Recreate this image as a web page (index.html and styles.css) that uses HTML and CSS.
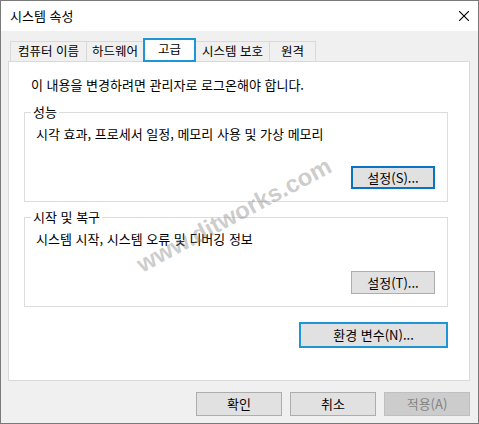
FILE: index.html
```html
<!DOCTYPE html>
<html lang="ko">
<head>
  <meta charset="UTF-8">
  <meta name="viewport" content="width=device-width, initial-scale=1.0">
  <title>시스템 속성</title>
  <link rel="stylesheet" href="styles.css">
</head>
<body>
  <div class="window">
    <!-- Title bar -->
    <div class="titlebar">
      <span class="title">시스템 속성</span>
      <svg class="close" width="10" height="10" viewBox="0 0 10 10">
        <path d="M0 0 L10 10 M10 0 L0 10" stroke="#000" stroke-width="1.1" fill="none"/>
      </svg>
    </div>

    <div class="body">
      <!-- Tabs -->
      <div class="tabs">
        <div class="tab tab-name">컴퓨터 이름</div>
        <div class="tab tab-hw">하드웨어</div>
        <div class="tab tab-adv selected">고급</div>
        <div class="tab tab-prot">시스템 보호</div>
        <div class="tab tab-remote">원격</div>
      </div>

      <!-- Tab page -->
      <div class="panel">
        <p class="notice">이 내용을 변경하려면 관리자로 로그온해야 합니다.</p>

        <div class="group">
          <span class="legend">성능</span>
          <p class="desc">시각 효과, 프로세서 일정, 메모리 사용 및 가상 메모리</p>
          <div class="group-actions">
            <button class="btn btn-small focus">설정(S)...</button>
          </div>
        </div>

        <div class="group second">
          <span class="legend">시작 및 복구</span>
          <p class="desc">시스템 시작, 시스템 오류 및 디버깅 정보</p>
          <div class="group-actions">
            <button class="btn btn-small">설정(T)...</button>
          </div>
        </div>

        <div class="panel-actions">
          <button class="btn btn-env hot">환경 변수(N)...</button>
        </div>
      </div>

      <!-- Dialog buttons -->
      <div class="footer">
        <button class="btn btn-dialog">확인</button>
        <button class="btn btn-dialog">취소</button>
        <button class="btn btn-dialog disabled">적용(A)</button>
      </div>
    </div>

    <div class="watermark">www.ditworks.com</div>
  </div>
</body>
</html>
```

FILE: styles.css
```css
html, body {
  margin: 0;
  padding: 0;
}
body {
  font-family: "Noto Sans CJK KR", "Noto Sans", sans-serif;
  font-size: 13px;
  line-height: 16px;
  color: #000;
  background: #fff;
}
.window {
  position: relative;
  width: 479px;
  height: 424px;
  box-sizing: border-box;
  border: 1px solid #7a7a7a;
  background: #f0f0f0;
  overflow: hidden;
}
.titlebar {
  height: 30px;
  background: #fff;
  display: flex;
  align-items: center;
  justify-content: space-between;
  padding: 0 9px 0 9px;
}
.title {
  margin-top: -1px;
}
.close {
  display: block;
  margin-top: -1px;
}

/* tabs */
.tabs {
  display: flex;
  align-items: flex-end;
  margin: 7px 0 0 9px;
}
.tab {
  box-sizing: border-box;
  height: 20px;
  border: 1px solid #d9d9d9;
  border-bottom: none;
  margin-right: -1px;
  background: #f0f0f0;
  display: flex;
  align-items: center;
  justify-content: center;
  padding-bottom: 1px;
  white-space: nowrap;
  font-size: 12.5px;
}
.tab-name { width: 77px; }
.tab-hw { width: 58px; }
.tab-adv { width: 53px; }
.tab-prot { width: 75px; }
.tab-remote { width: 47px; }
.tab.selected {
  position: relative;
  z-index: 1;
  height: 24px;
  margin-bottom: -1px;
  border: 2px solid #1e96d6;
  background: #fff;
  padding-bottom: 3px;
}

/* tab page */
.panel {
  box-sizing: border-box;
  height: 320px;
  margin: 0 8px 0 7px;
  padding: 15px 21px 0 15px;
  background: #fff;
  border: 1px solid #d9d9d9;
}
.notice {
  margin: 0 0 0 7px;
}
.group {
  margin-top: 19px;
  border: 1px solid #dcdcdc;
  padding: 0 12px 12px 11px;
}
.group.second {
  margin-top: 15px;
}
.legend {
  display: block;
  width: fit-content;
  margin: -9px 0 0 -5px;
  padding: 0 2px;
  background: #fff;
}
.desc {
  margin: 6px 0 0 0;
}
.group-actions,
.panel-actions {
  display: flex;
  justify-content: flex-end;
}
.group-actions {
  margin-top: 24px;
}
.panel-actions {
  margin-top: 15px;
}

/* buttons */
.btn {
  box-sizing: border-box;
  font-family: inherit;
  font-size: 13px;
  line-height: 16px;
  color: #000;
  background: #e1e1e1;
  border: 1px solid #adadad;
  border-radius: 0;
  padding: 0;
  margin: 0;
  white-space: nowrap;
}
.btn-small {
  width: 84px;
  height: 23px;
}
.btn-env {
  width: 149px;
  height: 26px;
}
.btn.focus {
  border: 2px solid #0a74c4;
}
.btn.hot {
  border: 2px solid #1e96d6;
}
.footer {
  display: flex;
  justify-content: flex-end;
  gap: 8px;
  margin-top: 11px;
  padding-right: 8px;
}
.btn-dialog {
  width: 86px;
  height: 24px;
}
.btn.disabled {
  background: #cccccc;
  border-color: #bfbfbf;
  color: #838383;
}

/* watermark over the dialog */
.watermark {
  position: absolute;
  left: 108px;
  top: 200px;
  width: 250px;
  text-align: center;
  white-space: nowrap;
  font-family: "Liberation Sans", Arial, sans-serif;
  font-weight: bold;
  font-size: 24px;
  line-height: 28px;
  color: rgba(110, 110, 110, 0.36);
  transform: rotate(-28deg);
  pointer-events: none;
}
```
